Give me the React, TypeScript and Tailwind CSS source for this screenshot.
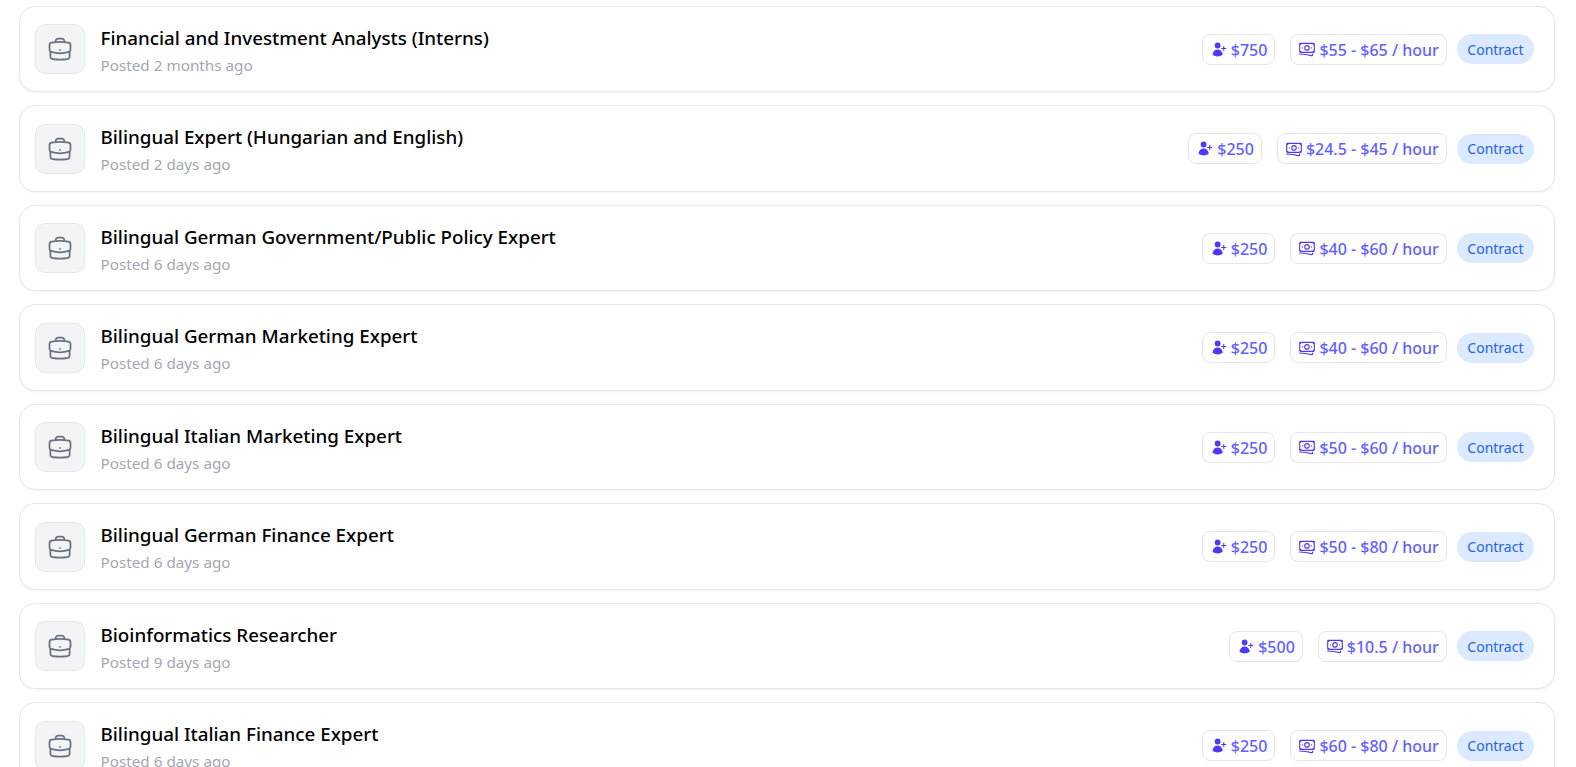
import { HiOutlineBanknotes, HiOutlineBriefcase, HiUserPlus } from 'react-icons/hi2';

interface IJob {
  title: string;
  posted: string;
  bonus: string;
  rate: string;
}

const jobs: IJob[] = [
  { title: 'Financial and Investment Analysts (Interns)', posted: 'Posted 2 months ago', bonus: '$750', rate: '$55 - $65 / hour' },
  { title: 'Bilingual Expert (Hungarian and English)', posted: 'Posted 2 days ago', bonus: '$250', rate: '$24.5 - $45 / hour' },
  { title: 'Bilingual German Government/Public Policy Expert', posted: 'Posted 6 days ago', bonus: '$250', rate: '$40 - $60 / hour' },
  { title: 'Bilingual German Marketing Expert', posted: 'Posted 6 days ago', bonus: '$250', rate: '$40 - $60 / hour' },
  { title: 'Bilingual Italian Marketing Expert', posted: 'Posted 6 days ago', bonus: '$250', rate: '$50 - $60 / hour' },
  { title: 'Bilingual German Finance Expert', posted: 'Posted 6 days ago', bonus: '$250', rate: '$50 - $80 / hour' },
  { title: 'Bioinformatics Researcher', posted: 'Posted 9 days ago', bonus: '$500', rate: '$10.5 / hour' },
  { title: 'Bilingual Italian Finance Expert', posted: 'Posted 6 days ago', bonus: '$250', rate: '$60 - $80 / hour' },
];

const Tag = ({ icon, label }: { icon: React.ReactNode; label: string }) => (
  <div className="flex h-[31px] items-center gap-[3px] rounded-lg border border-[#e3e6f0] bg-white px-[7px] text-base font-medium text-indigo-500">
    {icon}
    <span className="pt-px">{label}</span>
  </div>
);

const JobCard = ({ job }: { job: IJob }) => (
  <div className="flex h-[86.5px] shrink-0 items-center justify-between rounded-2xl border border-gray-200 bg-white pr-5 pl-[15px] shadow-xs">
    <div className="flex items-center gap-[15.5px]">
      <div className="flex h-[50px] w-[50px] items-center justify-center rounded-[10px] border border-[#e5e7f0] bg-gray-100">
        <HiOutlineBriefcase className="h-7 w-7 text-gray-500" />
      </div>
      <div className="flex flex-col pt-[2px]">
        <h3 className="text-[18.8px] leading-7 font-medium text-black">{job.title}</h3>
        <p className="mt-px text-[15.25px] leading-6 text-[#a3a8b3]">{job.posted}</p>
      </div>
    </div>
    <div className="flex items-center gap-[15px]">
      <Tag icon={<HiUserPlus className="ml-px h-[17px] w-[17px] text-indigo-600" />} label={job.bonus} />
      <div className="flex items-center gap-[10px]">
        <Tag icon={<HiOutlineBanknotes className="h-[18px] w-[18px] text-indigo-600" />} label={job.rate} />
        <span className="flex h-[30px] items-center rounded-full bg-blue-100 px-[10.5px] pt-px text-sm text-[#2563eb]">
          Contract
        </span>
      </div>
    </div>
  </div>
);

const App = () => {
  return (
    <div className="flex h-[767px] flex-col gap-[13px] overflow-hidden bg-white pt-[5.75px] pr-[21px] pl-[19px] font-['Noto_Sans',sans-serif]">
      {jobs.map((job) => (
        <JobCard key={job.title} job={job} />
      ))}
    </div>
  );
};

export default App;
